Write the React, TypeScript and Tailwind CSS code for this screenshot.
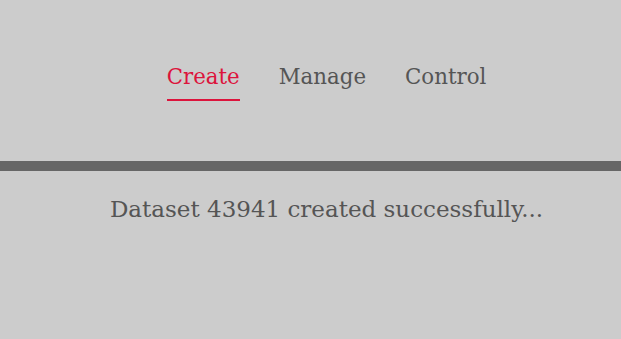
export default function App() {
  const tabs = ['Create', 'Manage', 'Control']
  const active = 'Create'

  return (
    <div className="min-h-[339px] bg-[#cccccc] pl-8 font-['DejaVu_Serif',serif] text-[#555555]">
      <nav className="flex justify-center gap-[39px] pt-[63px] h-[161px]">
        {tabs.map((t) => (
          <div key={t} className="flex flex-col items-stretch">
            <span className={`text-[21.33px] leading-[28px] ${t === active ? 'text-[#dc143c]' : ''}`}>{t}</span>
            {t === active && <span className="mt-[8px] h-[2px] bg-[#dc143c]" />}
          </div>
        ))}
      </nav>
      <div className="-ml-8 h-[10px] bg-[#666666]" />
      <p className="pt-[23px] text-center text-[23px] leading-[30px]">Dataset 43941 created successfully...</p>
    </div>
  )
}
